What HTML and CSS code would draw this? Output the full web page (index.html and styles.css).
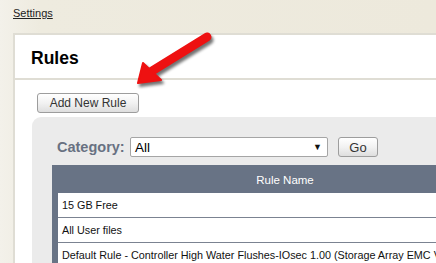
FILE: index.html
```html
<!DOCTYPE html>
<html>
<head>
<meta charset="utf-8">
<link rel="stylesheet" href="styles.css">
</head>
<body>
<div class="crumb"><a href="#">Settings</a></div>
<div class="panel">
  <div class="panel-head"><h1>Rules</h1></div>
  <div class="panel-body">
    <button class="btn add-btn">Add New Rule</button>
    <div class="filter-box">
      <div class="filter-row">
        <label class="cat-label">Category:</label>
        <div class="select"><span>All</span><span class="caret">&#9660;</span></div>
        <button class="btn go-btn">Go</button>
      </div>
      <div class="table-wrap">
        <div class="thead">Rule Name</div>
        <div class="row">15 GB Free</div>
        <div class="row">All User files</div>
        <div class="row">Default Rule - Controller High Water Flushes-IOsec 1.00 (Storage Array EMC VNX)</div>
      </div>
    </div>
  </div>
</div>
<svg class="arrow" width="436" height="263" viewBox="0 0 436 263">
  <defs>
    <filter id="sh" x="-20%" y="-20%" width="140%" height="140%">
      <feGaussianBlur stdDeviation="1.4"/>
    </filter>
  </defs>
  <g transform="translate(2,3)" filter="url(#sh)" opacity="0.55">
    <line x1="207" y1="37" x2="152" y2="71" stroke="#000" stroke-width="9" stroke-linecap="round"/>
    <polygon points="138,83 143,63 161,80" fill="#000" stroke="#000" stroke-width="2" stroke-linejoin="round"/>
  </g>
  <line x1="207" y1="37" x2="152" y2="71" stroke="#ee1111" stroke-width="9" stroke-linecap="round"/>
  <polygon points="138,83 143,63 161,80" fill="#ee1111" stroke="#ee1111" stroke-width="2" stroke-linejoin="round"/>
</svg>
</body>
</html>
```
FILE: styles.css
```css
html, body {
  margin: 0;
  padding: 0;
}
body {
  width: 436px;
  height: 263px;
  overflow: hidden;
  position: relative;
  font-family: "Liberation Sans", Arial, sans-serif;
  background: linear-gradient(to right, #f3f1ea 0px, #eeebdf 40px, #ede9dc 436px);
}
.crumb {
  height: 33px;
  padding-left: 13px;
  box-sizing: border-box;
  padding-top: 7px;
  font-size: 11px;
}
.crumb a {
  color: #222;
  text-decoration: underline;
}
.panel {
  margin-left: 13px;
  width: 423px;
  background: #fff;
  border-left: 2px solid #dfddd4;
  border-top: 2px solid #dfddd4;
  height: 230px;
  box-sizing: border-box;
  overflow: hidden;
}
.panel-head {
  height: 45px;
  border-bottom: 2px solid #dfddd4;
  padding-left: 16px;
  box-sizing: border-box;
}
.panel-head h1 {
  margin: 0;
  padding-top: 13px;
  font-size: 17.5px;
  font-weight: bold;
  color: #000;
  line-height: 20px;
}
.panel-body {
  padding-top: 13px;
}
.btn {
  font-family: "Liberation Sans", Arial, sans-serif;
  font-size: 12px;
  color: #333;
  background: linear-gradient(#ffffff, #f2f2f2 50%, #dedede);
  border: 1px solid #9d9d9d;
  border-radius: 3px;
  padding: 0;
  box-sizing: border-box;
}
.add-btn {
  display: block;
  margin-left: 22px;
  width: 102px;
  height: 20px;
}
.filter-box {
  margin-top: 4px;
  margin-left: 17px;
  background: #ebebeb;
  border-top-left-radius: 9px;
  padding-top: 20px;
  padding-left: 20px;
  height: 200px;
  box-sizing: border-box;
}
.filter-row {
  display: flex;
  align-items: center;
  height: 20px;
}
.cat-label {
  margin-left: 5px;
  width: 73px;
  font-size: 14.5px;
  font-weight: bold;
  color: #687182;
}
.select {
  width: 198px;
  height: 20px;
  box-sizing: border-box;
  background: #fff;
  border: 1px solid #a5a5a5;
  border-radius: 2px;
  display: flex;
  align-items: center;
  justify-content: space-between;
  padding: 0 4px 0 4px;
  font-size: 13.5px;
  color: #000;
}
.caret {
  font-size: 9px;
  color: #111;
  padding-right: 1px;
}
.go-btn {
  margin-left: 10px;
  width: 40px;
  height: 20px;
  font-size: 13px;
}
.table-wrap {
  margin-top: 8px;
  background: #687385;
  padding-left: 6px;
  overflow: hidden;
}
.thead {
  height: 28px;
  line-height: 30px;
  text-align: center;
  color: #fff;
  font-size: 11.5px;
  width: 466px;
  margin-left: -6px;
}
.row {
  background: #fff;
  height: 25px;
  line-height: 25px;
  box-sizing: border-box;
  border-bottom: 1px solid #7b8391;
  padding-left: 4px;
  font-size: 10.8px;
  color: #111;
  white-space: nowrap;
  overflow: hidden;
}
.arrow {
  position: absolute;
  left: 0;
  top: 0;
  pointer-events: none;
}
```
